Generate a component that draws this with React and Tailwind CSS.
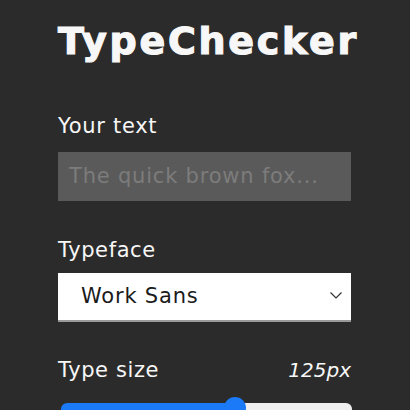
import React from "react";

export default function App() {
  const font = { fontFamily: '"DejaVu Sans", sans-serif' };
  return (
    <div className="w-[410px] h-[410px] overflow-hidden bg-[#2b2b2b] text-[#f7f7f7]" style={font}>
      <div className="ml-[58px] w-[293px] flex flex-col">
        <h1 className="mt-[22px] text-[38px] leading-none font-bold tracking-[2.7px] whitespace-nowrap [-webkit-text-stroke:1.2px_#f7f7f7] font-['DejaVu_Sans',sans-serif]">
          TypeChecker
        </h1>

        <label className="mt-[56px] text-[21px] leading-none tracking-[0.7px] font-['DejaVu_Sans',sans-serif]">
          Your text
        </label>
        <div className="mt-[15px] h-[49px] bg-[#5a5a5a] flex items-center pl-[11px]">
          <span className="text-[21px] leading-none tracking-[0.8px] text-[#7c7c7c] whitespace-nowrap font-['DejaVu_Sans',sans-serif]">
            The quick brown fox...
          </span>
        </div>

        <label className="mt-[39px] text-[21px] leading-none tracking-[0.6px] font-['DejaVu_Sans',sans-serif]">
          Typeface
        </label>
        <div className="mt-[12px] h-[49px] bg-white border-b-2 border-[#9a9a9a] flex items-center justify-between pl-[23px] pr-[8px]">
          <span className="text-[21px] leading-none tracking-[0.8px] text-[#1b1b1b] whitespace-nowrap font-['DejaVu_Sans',sans-serif]">
            Work Sans
          </span>
          <svg width="14" height="9" viewBox="0 0 14 9" className="mt-[-3px]">
            <path d="M1.5 1.5 L7 7 L12.5 1.5" fill="none" stroke="#333" strokeWidth="1.2" />
          </svg>
        </div>

        <div className="mt-[38px] flex items-start justify-between">
          <span className="text-[21px] leading-none tracking-[0.6px] font-['DejaVu_Sans',sans-serif]">
            Type size
          </span>
          <span className="text-[20px] leading-none italic font-['DejaVu_Sans',sans-serif]">
            125px
          </span>
        </div>

        <div className="relative mt-[22px] ml-[3px] w-[291px] h-[20px]">
          <div className="flex h-full rounded-t-[6px] overflow-hidden">
            <div className="w-[184px] bg-[#1a7af8]" />
            <div className="flex-1 bg-[#efefef]" />
          </div>
          <div className="absolute left-[163px] top-[-6px] w-[22px] h-[22px] rounded-full bg-[#1a7af8]" />
        </div>
      </div>
    </div>
  );
}
